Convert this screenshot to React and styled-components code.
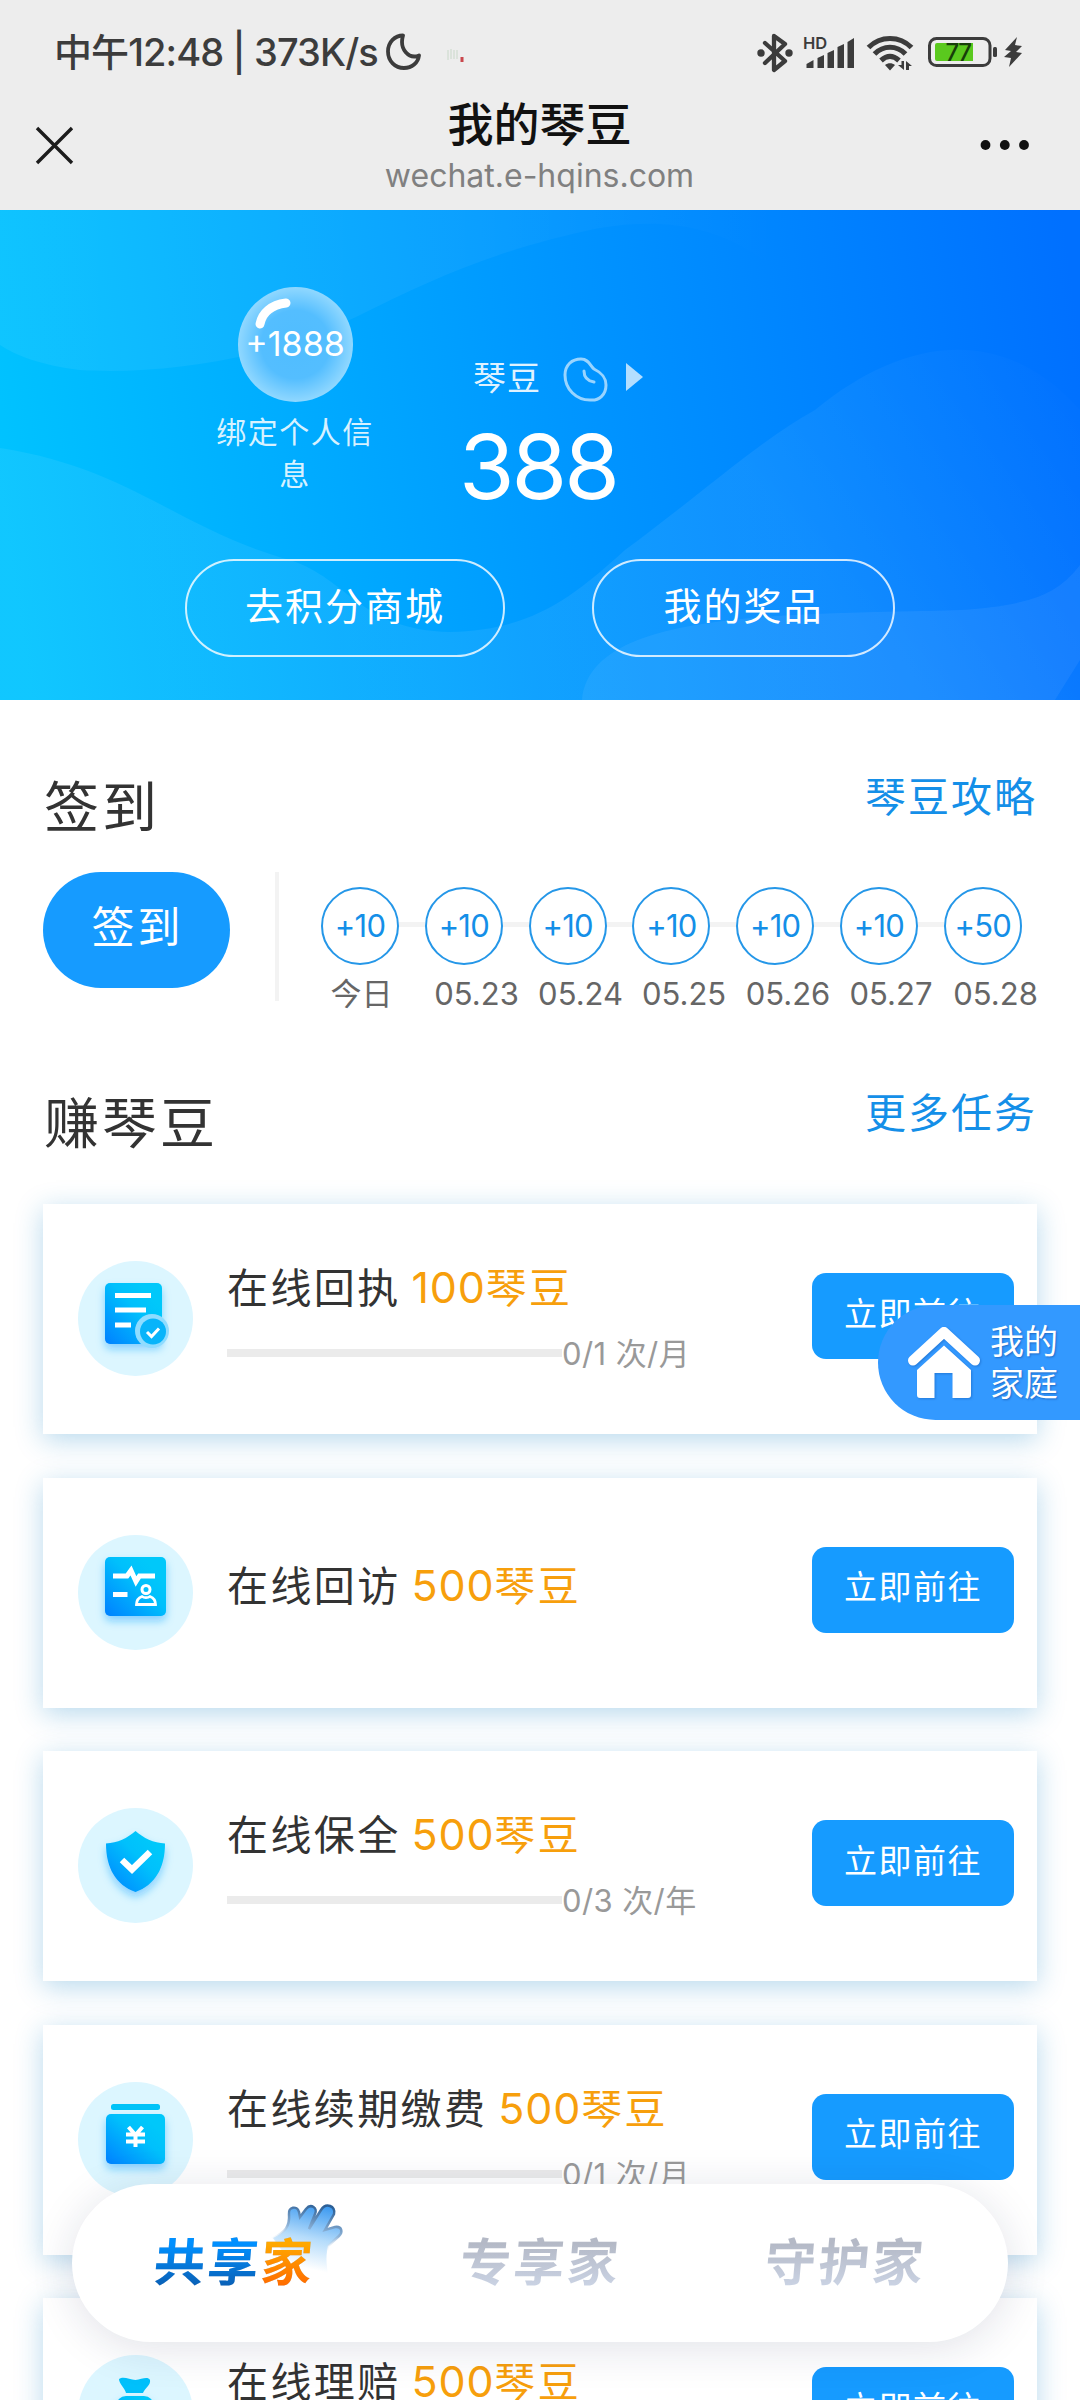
import React from "react";
import styled, { createGlobalStyle, css } from "styled-components";

const GlobalStyle = createGlobalStyle`
  * { box-sizing: border-box; }
  html, body { margin: 0; padding: 0; }
  body {
    background: #fff;
    font-family: Inter, "Noto Sans CJK SC", sans-serif;
    white-space: nowrap;
  }
`;

const Page = styled.div`
  position: relative;
  width: 1080px;
  height: 2400px;
  overflow: hidden;
  background: #fff;
`;

const TopBar = styled.header`
  height: 210px;
  background: #ededed;
`;

const StatusBar = styled.div`
  display: flex;
  align-items: center;
  justify-content: space-between;
  height: 104px;
  padding: 0 56px 0 54px;
`;

const StatusLeft = styled.div`
  display: flex;
  align-items: center;
  color: #3c3c3c;
  font-size: 38px;
  font-weight: 500;
  line-height: 50px;
  letter-spacing: -0.9px;
`;

const MoonIcon = styled.svg`
  width: 36px;
  height: 38px;
  margin-left: 7px;
`;

const TinyIcon = styled.svg`
  width: 18px;
  height: 16px;
  margin: 6px 0 0 26px;
`;

const StatusIcons = styled.svg`
  width: 268px;
  height: 44px;
`;

const TitleBar = styled.div`
  display: flex;
  align-items: flex-start;
  justify-content: space-between;
  height: 106px;
  padding: 0 50px 0 35px;
`;

const BarIcon = styled.svg`
  width: ${(p) => p.$w}px;
  height: 40px;
  margin-top: 21px;
`;

const TitleBlock = styled.div`
  display: flex;
  flex-direction: column;
  align-items: center;
  margin-left: 24px;
`;

const Title = styled.h1`
  margin: -8px 0 0;
  font-size: 46px;
  font-weight: 500;
  line-height: 56px;
  color: #111;
`;

const Domain = styled.div`
  margin-top: 4px;
  font-size: 32px;
  line-height: 40px;
  color: #808080;
`;

const Hero = styled.section`
  position: relative;
  height: 490px;
  color: #fff;
`;

const HeroBackground = styled.svg`
  position: absolute;
  inset: 0;
  width: 1080px;
  height: 490px;
`;

const HeroBody = styled.div`
  position: relative;
  display: flex;
  align-items: flex-start;
  height: 349px;
  padding: 77px 0 0 215px;
`;

const BonusColumn = styled.div`
  display: flex;
  flex-direction: column;
  align-items: center;
  width: 160px;
`;

const Bubble = styled.div`
  position: relative;
  display: flex;
  align-items: center;
  justify-content: center;
  width: 115px;
  height: 115px;
  padding-bottom: 2px;
  border-radius: 50%;
  background: radial-gradient(circle at 50% 50%, #50bdff 0%, #54beff 42%, #93d9ff 72%);
  font-size: 34px;
`;

const Shine = styled.svg`
  position: absolute;
  left: 12px;
  top: 6px;
  width: 46px;
  height: 40px;
`;

const BonusLabel = styled.div`
  width: 160px;
  margin-top: 9px;
  text-align: center;
  white-space: normal;
  word-break: break-all;
  font-size: 30px;
  line-height: 42px;
  letter-spacing: 1.5px;
  color: rgba(255, 255, 255, 0.85);
`;

const Balance = styled.div`
  display: flex;
  flex-direction: column;
  margin: 68px 0 0 84px;
`;

const BalanceTitle = styled.div`
  display: flex;
  align-items: center;
  height: 50px;
  padding-left: 14px;
  font-size: 33px;
  letter-spacing: 1px;
  color: rgba(255, 255, 255, 0.9);
`;

const BalanceName = styled.span`
  margin-bottom: 8px;
`;

const BeanIcon = styled.svg`
  width: 46px;
  height: 46px;
  margin-left: 22px;
`;

const Triangle = styled.span`
  margin: 0 0 6px 17px;
  border-left: 17px solid rgba(255, 255, 255, 0.7);
  border-top: 14px solid transparent;
  border-bottom: 14px solid transparent;
`;

const BalanceValue = styled.div`
  margin-top: 11px;
  font-size: 90px;
  line-height: 102px;
  font-weight: 400;
  letter-spacing: -3px;
`;

const HeroButtons = styled.div`
  position: relative;
  display: flex;
  gap: 87px;
  padding-left: 185px;
`;

const HeroButton = styled.button`
  width: ${(p) => p.$w}px;
  height: 98px;
  padding: 0 0 9px;
  border: 2px solid rgba(255, 255, 255, 0.8);
  border-radius: 49px;
  background: transparent;
  color: #fff;
  font: inherit;
  font-size: 38px;
  letter-spacing: 2px;
`;

const SectionHead = styled.div`
  display: flex;
  justify-content: space-between;
  align-items: flex-start;
  padding: 0 43px 0 44px;
`;

const SectionTitle = styled.h2`
  margin: 0;
  font-size: 55px;
  font-weight: 400;
  line-height: 80px;
  letter-spacing: 3px;
  color: #333;
`;

const SectionLink = styled.a`
  font-size: 41px;
  line-height: 60px;
  letter-spacing: 2px;
  color: #148fe8;
`;

const SignSection = styled.section`
  height: 383px;
  padding-top: 67px;
`;

const SignRow = styled.div`
  display: flex;
  align-items: flex-start;
  margin-top: 25px;
  padding-left: 43px;
`;

const SignButton = styled.button`
  width: 187px;
  height: 116px;
  padding: 0 0 12px 2px;
  border: 0;
  border-radius: 58px;
  background: #169bff;
  color: #fff;
  font: inherit;
  font-size: 43px;
  letter-spacing: 3px;
`;

const Divider = styled.div`
  width: 4px;
  height: 129px;
  margin-left: 45px;
  background: #f3f3f3;
`;

const Days = styled.div`
  display: flex;
  margin: 15px 0 0 42px;
`;

const Day = styled.div`
  width: 103.8px;
`;

const DayTop = styled.div`
  display: flex;
  align-items: center;
  height: 78px;
`;

const DayCircle = styled.div`
  display: flex;
  align-items: center;
  justify-content: center;
  width: 78px;
  height: 78px;
  padding-bottom: 2px;
  border: 2px solid #2597e8;
  border-radius: 50%;
  font-size: 31px;
  letter-spacing: -0.8px;
  color: #148fe8;
`;

const Connector = styled.div`
  flex: 1;
  height: 5px;
  margin-top: -4px;
  background: #f3f3f3;
`;

const DayLabel = styled.div`
  margin: 8px 0 0 9.5px;
  font-size: 31px;
  line-height: 42px;
  color: #666;
`;

const TaskList = styled.div`
  display: flex;
  flex-direction: column;
  gap: 43.5px;
  margin-top: 41px;
  padding: 0 43px;
`;

const TaskCard = styled.div`
  display: flex;
  height: 230px;
  padding: 0 23px 0 35px;
  background: #fff;
  box-shadow: 0 6px 26px rgba(20, 130, 195, 0.3);
`;

const TaskIconCircle = styled.svg`
  width: 115px;
  height: 115px;
  margin-top: 57px;
`;

const TaskInfo = styled.div`
  flex: 1;
  display: flex;
  flex-direction: column;
  padding: ${(p) => (p.$single ? "79px" : "55px")} 0 0 34px;
`;

const TaskTitle = styled.div`
  height: 58px;
  font-size: 41px;
  line-height: 58px;
  letter-spacing: 2.4px;
  color: #333;
`;

const Reward = styled.span`
  margin-left: -3px;
  color: #f79f0c;
`;

const RewardNumber = styled.span`
  font-size: 43px;
  line-height: 50px;
  letter-spacing: 0.8px;
`;

const Progress = styled.div`
  display: flex;
  align-items: center;
  margin-top: 15px;
  line-height: 44px;
  font-size: 31px;
  letter-spacing: 0.4px;
  color: #999;
`;

const Track = styled.div`
  width: 335px;
  height: 8px;
  margin-bottom: 2px;
  background: #ebebeb;
`;

const GoButton = styled.button`
  width: 202px;
  height: 86px;
  margin-top: 69px;
  padding: 0 0 9px;
  border: 0;
  border-radius: 14px;
  background: #169bff;
  color: #fff;
  font: inherit;
  font-size: 33px;
  letter-spacing: 1.5px;
`;

const FamilyTab = styled.div`
  position: absolute;
  right: 0;
  top: 1305px;
  display: flex;
  align-items: center;
  width: 202px;
  height: 115px;
  padding-left: 28px;
  border-radius: 58px 0 0 58px;
  background: #3399ff;
  color: #fff;
  font-size: 34px;
  line-height: 42px;
  text-shadow: 1px 1px 2px rgba(0, 50, 130, 0.45);
`;

const HouseIcon = styled.svg`
  width: 76px;
  height: 78px;
  margin-right: 8px;
  filter: drop-shadow(1px 1px 1px rgba(0, 50, 130, 0.3));
`;

const BottomNav = styled.nav`
  position: absolute;
  left: 72px;
  top: 2184px;
  display: flex;
  align-items: center;
  width: 936px;
  height: 158px;
  padding: 0 10px;
  border-radius: 79px;
  background: #fff;
  box-shadow: 0 6px 44px rgba(20, 30, 80, 0.13);
`;

const NavTab = styled.div`
  position: relative;
  flex: 1;
  text-align: center;
`;

const gradientText = css`
  background-clip: text;
  -webkit-background-clip: text;
  color: transparent;
`;

const NavText = styled.span`
  position: relative;
  display: inline-block;
  font-size: 51px;
  font-weight: 700;
  line-height: 66px;
  letter-spacing: 2.5px;
  transform: skewX(-5deg);
  background-image: linear-gradient(#b4b9c6 20%, #ccd5e6 90%);
  ${gradientText}
`;

const NavBlue = styled.span`
  background-image: linear-gradient(#0090ff 20%, #0a5fb4 90%);
  ${gradientText}
`;

const NavOrange = styled.span`
  background-image: linear-gradient(#ffa800 20%, #ff6a00 90%);
  ${gradientText}
`;

const HandIcon = styled.svg`
  position: absolute;
  left: 187px;
  top: -28px;
  width: 76px;
  height: 84px;
`;

const days = [
    { value: "+10", label: "今日" },
    { value: "+10", label: "05.23" },
    { value: "+10", label: "05.24" },
    { value: "+10", label: "05.25" },
    { value: "+10", label: "05.26" },
    { value: "+10", label: "05.27" },
    { value: "+50", label: "05.28" },
];

const tasks = [
    { icon: "receipt", name: "在线回执", amount: "100", progress: "0/1 次/月" },
    { icon: "visit", name: "在线回访", amount: "500" },
    { icon: "shield", name: "在线保全", amount: "500", progress: "0/3 次/年" },
    { icon: "wallet", name: "在线续期缴费", amount: "500", progress: "0/1 次/月" },
    { icon: "claim", name: "在线理赔", amount: "500", progress: "0/1 次/月" },
];

const taskShapes = {
    receipt: (
        <>
            <rect x="27" y="22" width="57" height="61" rx="5" fill="url(#taskFill)" filter="url(#taskGlow)" />
            <path d="M37 34.500h36M37 49h31M37 64h16" stroke="#fff" strokeWidth="5" />
            <circle cx="74" cy="70" r="17" fill="#8fdcff" />
            <circle cx="75" cy="70.500" r="13" fill="#08b4fa" />
            <path d="M69 71l4.500 4.500 7.500-8" stroke="#fff" strokeWidth="3" fill="none" />
        </>
    ),
    visit: (
        <>
            <rect x="27" y="22" width="61" height="59" rx="5" fill="url(#taskFill)" filter="url(#taskGlow)" />
            <path d="M35 41h14l4-5.500 5 11 3.500-5.500h15.500M35 59.500h14.500" stroke="#fff" strokeWidth="5" fill="none" />
            <circle cx="68" cy="54.500" r="4" fill="none" stroke="#fff" strokeWidth="3" />
            <path d="M64 61.500c-4 1.500-5.500 4.500-5.500 8h19c0-3.500-1.500-6.500-5.500-8-2 1.500-6 1.500-8 0z" fill="none" stroke="#fff" strokeWidth="2.800" />
        </>
    ),
    shield: (
        <>
            <path d="M57.500 23c8 7 18 12 29.500 12.500C87 60 77 77 57.500 84 38 77 28 60 28 35.500 39.500 35 49.500 30 57.500 23z" fill="url(#taskFill)" filter="url(#taskGlow)" />
            <path d="M44 52l10 9.500L72 44" stroke="#fff" strokeWidth="6.500" fill="none" />
        </>
    ),
    wallet: (
        <>
            <rect x="33" y="22" width="49" height="6" rx="2.500" fill="#00c3f8" />
            <rect x="28" y="32" width="59" height="50" rx="5" fill="url(#taskFill)" filter="url(#taskGlow)" />
            <path d="M50.500 45l7 8 7-8M48 52.500h19M48 59.500h19M57.500 52v13" stroke="#fff" strokeWidth="4" fill="none" />
        </>
    ),
    claim: (
        <>
            <path d="M41 24c4-3 10 0 16.500 1C64 24 70 21 72 25c1 5-5 8-7 13H48c-1-5-7-9-7-14z" fill="#00c0fb" />
            <rect x="38" y="41" width="38" height="40" rx="10" fill="url(#taskFill)" filter="url(#taskGlow)" />
        </>
    ),
};

function TaskIcon({ name }) {
    return (
        <TaskIconCircle viewBox="0 0 115 115">
            <defs>
                <linearGradient id="taskFill" x1="0" y1="1" x2="0.800" y2="0.200">
                    <stop offset="0" stopColor="#0080ff" />
                    <stop offset="0.700" stopColor="#00c0fc" />
                    <stop offset="1" stopColor="#00c8fa" />
                </linearGradient>
                <filter id="taskGlow" x="-30%" y="-30%" width="160%" height="170%">
                    <feDropShadow dx="0" dy="5" stdDeviation="4" floodColor="#1aa2ff" floodOpacity="0.45" />
                </filter>
            </defs>
            <circle cx="57.500" cy="57.500" r="57.500" fill="#dcf6ff" />
            {taskShapes[name]}
        </TaskIconCircle>
    );
}

function Waves() {
    return (
        <HeroBackground viewBox="0 0 1080 490">
            <defs>
                <linearGradient id="sky" gradientUnits="userSpaceOnUse" x1="0" y1="280" x2="1080" y2="120">
                    <stop offset="0" stopColor="#00c3ff" />
                    <stop offset="0.250" stopColor="#00aeff" />
                    <stop offset="0.550" stopColor="#0094ff" />
                    <stop offset="1" stopColor="#0070ff" />
                </linearGradient>
                <linearGradient id="topWave" x1="0" y1="0" x2="1" y2="0">
                    <stop offset="0" stopColor="#fff" stopOpacity="0.060" />
                    <stop offset="0.600" stopColor="#fff" stopOpacity="0.045" />
                    <stop offset="1" stopColor="#fff" stopOpacity="0" />
                </linearGradient>
                <linearGradient id="midWave" gradientUnits="userSpaceOnUse" x1="1080" y1="130" x2="800" y2="330">
                    <stop offset="0" stopColor="#fff" stopOpacity="0" />
                    <stop offset="1" stopColor="#fff" stopOpacity="0.065" />
                </linearGradient>
            </defs>
            <rect width="1080" height="490" fill="url(#sky)" />
            <path d="M0 0H780V64C730 18 670 6 600 18C500 38 430 70 360 105C270 150 160 165 80 160C40 155 15 145 0 135Z" fill="url(#topWave)" />
            <path d="M0 238C130 258 180 320 290 350C350 370 360 420 450 422C530 420 570 390 625 340C700 285 760 230 815 200C900 130 1000 110 1080 200V490H0Z" fill="url(#midWave)" />
            <path d="M582 490C590 400 780 405 960 400C1040 395 1060 380 1080 355V450L1055 490Z" fill="#fff" fillOpacity="0.060" />
        </HeroBackground>
    );
}

function StatusGlyphs() {
    return (
        <StatusIcons viewBox="756 30 268 44">
            <g fill="none" stroke="#3c3c3c" strokeWidth="4.300" strokeLinecap="round" strokeLinejoin="round">
                <path d="M765 43l20 18-11 9V36l11 8-20 19" />
            </g>
            <circle cx="761" cy="53" r="3.700" fill="#3c3c3c" />
            <circle cx="789" cy="53" r="3.700" fill="#3c3c3c" />
            <text x="803" y="48.500" fontSize="16.500" fontWeight="600" fill="#3c3c3c">HD</text>
            <path d="M806.500 68v-4l7-4v8zM817.500 68V58l6.500-3v13zM827.500 68V53l6.500-3v18zM837.500 68V47l6.500-3v24zM847.500 68V42l6.500-4v30z" fill="#3c3c3c" />
            <g fill="none" stroke="#3c3c3c" strokeWidth="5.200">
                <path d="M868.500 47.500c12-12 31-12 43 0M874.500 54c9-9 22-9 31 0M881 60.500c6-5.500 12-5.500 18 0" />
            </g>
            <path d="M885 65c3-2.500 7-2.500 10 0l-5 5.500zM898 65h3.500v-4h2.500v9zM906 70V61l6 5h-3v4z" fill="#3c3c3c" />
            <rect x="929.500" y="38.500" width="60.500" height="27" rx="7" fill="none" stroke="#3c3c3c" strokeWidth="3" />
            <path d="M937 43h36v18h-36a2 2 0 0 1-2-2V45a2 2 0 0 1 2-2z" fill="#5ac91e" />
            <text x="945.500" y="61" fontSize="24" fontWeight="500" letterSpacing="-1.500" fill="#173e0a">77</text>
            <rect x="993" y="47" width="4" height="10" rx="1.500" fill="#3c3c3c" />
            <path d="M1017 37l-12 13 6 1-7 6 7 1-2 9 13-14-6-1 6-6-7-1z" fill="#3c3c3c" />
        </StatusIcons>
    );
}

function App() {
    return (
        <Page>
            <GlobalStyle />
            <TopBar>
                <StatusBar>
                    <StatusLeft>
                        中午12:48 | 373K/s
                        <MoonIcon viewBox="0 0 36 38">
                            <path d="M18 2.500C10 2.500 3 9 3 18.500S10 35 19 35c8 0 14-5 15-12.500-10 4-20-6-16-20z" fill="none" stroke="#3c3c3c" strokeWidth="3.800" strokeLinejoin="round" />
                        </MoonIcon>
                        <TinyIcon viewBox="0 0 18 16">
                            <path d="M1 3v10M4 2v10M7 3v9M10 3v9" stroke="#c9d8c9" strokeWidth="1" />
                            <rect x="13.500" y="10" width="3" height="5" fill="#c9474d" />
                        </TinyIcon>
                    </StatusLeft>
                    <StatusGlyphs />
                </StatusBar>
                <TitleBar>
                    <BarIcon $w={40} viewBox="0 0 40 40">
                        <path d="M2 3l35 35M37 3L2 38" stroke="#1c1c1c" strokeWidth="3.400" />
                    </BarIcon>
                    <TitleBlock>
                        <Title>我的琴豆</Title>
                        <Domain>wechat.e-hqins.com</Domain>
                    </TitleBlock>
                    <BarIcon $w={50} viewBox="0 0 50 40">
                        <circle cx="5.500" cy="20" r="4.900" fill="#111" />
                        <circle cx="24.800" cy="20" r="4.900" fill="#111" />
                        <circle cx="44" cy="20" r="4.900" fill="#111" />
                    </BarIcon>
                </TitleBar>
            </TopBar>

            <Hero>
                <Waves />
                <HeroBody>
                    <BonusColumn>
                        <Bubble>
                            <Shine viewBox="0 0 46 40">
                                <path d="M10 31C12 20 21 12 36 10" fill="none" stroke="#fff" strokeWidth="9" strokeLinecap="round" />
                            </Shine>
                            +1888
                        </Bubble>
                        <BonusLabel>绑定个人信息</BonusLabel>
                    </BonusColumn>
                    <Balance>
                        <BalanceTitle>
                            <BalanceName>琴豆</BalanceName>
                            <BeanIcon viewBox="0 0 46 46">
                                <path d="M18 2C26 2 27 9 31 12C37 15 43 19 43 28C43 38 36 44 27 43C13 43 2 32 2 18C2 8 9 2 18 2Z" fill="none" stroke="rgba(255,255,255,0.6)" strokeWidth="3" />
                                <path d="M21 14C21 21 25 24 31 25" fill="none" stroke="rgba(255,255,255,0.6)" strokeWidth="3" strokeLinecap="round" />
                            </BeanIcon>
                            <Triangle />
                        </BalanceTitle>
                        <BalanceValue>388</BalanceValue>
                    </Balance>
                </HeroBody>
                <HeroButtons>
                    <HeroButton $w={320}>去积分商城</HeroButton>
                    <HeroButton $w={303}>我的奖品</HeroButton>
                </HeroButtons>
            </Hero>

            <SignSection>
                <SectionHead>
                    <SectionTitle>签到</SectionTitle>
                    <SectionLink>琴豆攻略</SectionLink>
                </SectionHead>
                <SignRow>
                    <SignButton>签到</SignButton>
                    <Divider />
                    <Days>
                        {days.map((day, i) => (
                            <Day key={day.label}>
                                <DayTop>
                                    <DayCircle>{day.value}</DayCircle>
                                    {i < days.length - 1 && <Connector />}
                                </DayTop>
                                <DayLabel>{day.label}</DayLabel>
                            </Day>
                        ))}
                    </Days>
                </SignRow>
            </SignSection>

            <section>
                <SectionHead>
                    <SectionTitle>赚琴豆</SectionTitle>
                    <SectionLink>更多任务</SectionLink>
                </SectionHead>
                <TaskList>
                    {tasks.map((task) => (
                        <TaskCard key={task.name}>
                            <TaskIcon name={task.icon} />
                            <TaskInfo $single={!task.progress}>
                                <TaskTitle>
                                    {task.name} <Reward><RewardNumber>{task.amount}</RewardNumber>琴豆</Reward>
                                </TaskTitle>
                                {task.progress && (
                                    <Progress>
                                        <Track />
                                        {task.progress}
                                    </Progress>
                                )}
                            </TaskInfo>
                            <GoButton>立即前往</GoButton>
                        </TaskCard>
                    ))}
                </TaskList>
            </section>

            <FamilyTab>
                <HouseIcon viewBox="0 0 76 78">
                    <path d="M7 36.500L38 8L69 36.500" fill="none" stroke="#fff" strokeWidth="10" strokeLinecap="round" strokeLinejoin="round" />
                    <path d="M38 21.500L65 46V71a3 3 0 0 1-3 3H46.500V49H28.500V74H14a3 3 0 0 1-3-3V46Z" fill="#fff" />
                </HouseIcon>
                <div>
                    我的
                    <br />
                    家庭
                </div>
            </FamilyTab>

            <BottomNav>
                <NavTab>
                    <HandIcon viewBox="0 0 76 84">
                        <defs>
                            <linearGradient id="hand" x1="0.700" y1="0" x2="0.500" y2="1">
                                <stop offset="0" stopColor="#3d9af0" />
                                <stop offset="0.450" stopColor="#b5dcfb" />
                                <stop offset="0.850" stopColor="#fff" />
                            </linearGradient>
                            <linearGradient id="handEdge" x1="0.700" y1="0" x2="0.500" y2="1">
                                <stop offset="0" stopColor="#2c5f96" />
                                <stop offset="0.350" stopColor="#8fb4d8" />
                                <stop offset="0.600" stopColor="#fff" stopOpacity="0" />
                            </linearGradient>
                        </defs>
                        <path d="M4 36C16 30 21 25 20 12C19 5 28 3 30 10L31 15L37 7C42 1 49 6 46 12L40 27L52 8C57 0 67 4 65 12L56 28L66 25C73 24 74 30 70 34L59 44C56 56 58 66 60 78C40 80 20 60 4 36Z" fill="url(#hand)" stroke="url(#handEdge)" strokeWidth="2.500" />
                    </HandIcon>
                    <NavText>
                        <NavBlue>共享</NavBlue>
                        <NavOrange>家</NavOrange>
                    </NavText>
                </NavTab>
                <NavTab>
                    <NavText>专享家</NavText>
                </NavTab>
                <NavTab>
                    <NavText>守护家</NavText>
                </NavTab>
            </BottomNav>
        </Page>
    );
}

export default App;
